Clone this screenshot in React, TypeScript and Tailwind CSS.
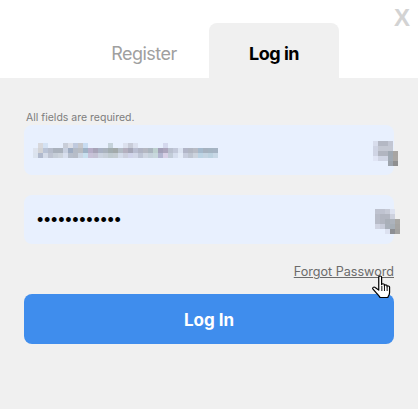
const topRow: [number, string][] = [
  [38, '#d8d8dc'], [43, '#d4e2f4'], [63, '#c9ced9'], [68, '#dcdfe8'], [73, '#c0cade'], [78, '#c7c8cc'], [83, '#c8dcf2'],
  [108, '#c5d2da'], [123, '#dce1ee'], [128, '#c8ccd8'], [133, '#dbe0ee'], [163, '#d5d9ee'],
];

const midRow = [
  '#dde3ee', '#d2d3d6', '#b9c3d6', '#b5bccb', '#aab2bd', '#aab2bd', '#c8d0e0', '#9eacc2', '#b4bbc6', '#b8bcc2',
  '#9fb3c6', '#b6aec8', '#a8a4b8', '#a9b2c4', '#aab3be', '#a2adb0', '#a3aaaa', '#b3bcc6', '#b4b0bf', '#a5a7b8',
  '#b8bdd0', '#b0b4c4', '#b5b8c2', '#aab5bf', '#bdd0cf', '#a29fb8', '#aca6bd', '#b9c0cf', '#c3c9da', '#dce4f2',
  '#b2b6c8', '#b1b6c2', '#b8bcc6', '#a4b9cc', '#a6b2c0', '#a4b4c2', '#a6b4c4',
];

const lowRow = [
  '#dbe3ee', '#b1bacd', '#d4dbe8', '#bec4d2', '#c6ced8', '#ccd3dc', '#d8dfee', '#b7bfcc', '#b7bdc8', '#cbd5e2',
  '#c8e0ee', '#c8c2d8', '#c4c2d4', '#cbd3e0', '#c8d0da', '#c0cbd0', '#c4ccd2', '#d4dcea', '#ccd0de', '#d0d4ea',
  '#d2d8e8', '#bfc6d6', '#cfd6e2', '#c6d2dc', '#c8d8dd', '#b3b6d0', '#d8d0e6', '#c2ccd8', '#d6deee', '#e4ecf8',
  '#c8cede', '#bfc6d2', '#cdd4de', '#bcd4e4', '#c4d4e2', '#bcd2e0', '#c8d8e6',
];

const keyOne = [
  ['#d8ddec', '#b4b8c4', '#b4b8c4', '#c2c6d3', ''],
  ['#cfd4e4', '#c4c8d3', '#c4c8d3', '#c4c8d3', ''],
  ['#cfd4e4', '#b1b5c0', '#b1b5c0', '#9fa8b2', '#a8a5a2'],
  ['#e0e5f5', '#d0d5e4', '#d0d5e4', '#a0a9b3', '#a9a6a3'],
  ['', '', '', '#9ca3ab', '#8f8f8f'],
];

const keyTwo = [
  ['#bfc3d0', '#bfc3d0', '#c6cad6', '#dde2f0', ''],
  ['#b8bcc8', '#b2b6c1', '#b2b6c1', '#cdd1de', ''],
  ['#b8bcc8', '#b2b6c1', '#a9afb8', '#adb3bc', '#a9a8a5'],
  ['#d0d4e2', '#c8ccda', '#a9b0ba', '#a7afb7', '#a6a5a3'],
  ['', '', '#dce1f0', '#8d8f93', '#a3a2a0'],
];

function BlurredEmail() {
  return (
    <svg width="186" height="15" viewBox="0 0 186 15" shapeRendering="crispEdges" className="mt-[1px] block">
      {topRow.map(([x, fill]) => (
        <rect key={x} x={x - 33} y={0} width={5} height={5} fill={fill} />
      ))}
      {midRow.map((fill, i) => (
        <rect key={i} x={i * 5} y={5} width={5} height={5} fill={fill} />
      ))}
      {lowRow.map((fill, i) => (
        <rect key={i} x={i * 5} y={10} width={5} height={5} fill={fill} />
      ))}
    </svg>
  );
}

function BlurredKey({ rows, className }: { rows: string[][]; className: string }) {
  return (
    <svg width="25" height="25" viewBox="0 0 25 25" shapeRendering="crispEdges" className={className}>
      {rows.map((row, y) =>
        row.map((fill, x) =>
          fill ? <rect key={`${x}-${y}`} x={x * 5} y={y * 5} width={5} height={5} fill={fill} /> : null
        )
      )}
    </svg>
  );
}

function HandCursor() {
  return (
    <svg
      width="21"
      height="25"
      viewBox="0 0 19 25"
      preserveAspectRatio="none"
      className="absolute left-[371px] top-[275px]"
    >
      <path
        d="M7 2.2c0-1.6 2.6-1.6 2.6 0v7.6c0-1.4 2.5-1.4 2.5 0v1c0-1.3 2.4-1.3 2.4 0v1c0-1.2 2.3-1.2 2.3 0.2v5.4c0 2.4-1 3.4-1.6 5.1H8.2c-.7-1.8-2.2-3.2-3.8-5.2l-2.6-3.2c-1-1.4.8-2.8 2-1.6L7 15.2z"
        fill="#fff"
        stroke="#000"
        strokeWidth="1.1"
        strokeLinejoin="round"
      />
      <path d="M9.8 11v5M12.2 11v5M14.6 12v4" stroke="#000" strokeWidth="0.9" fill="none" />
    </svg>
  );
}

export default function App() {
  return (
    <div className="relative h-[409px] w-[418px] overflow-hidden bg-white font-['Inter',sans-serif]">
      <button className="absolute left-[394px] top-[4px] font-['Liberation_Sans',sans-serif] text-[24px] font-bold leading-7 text-[#d3d3d3]">
        X
      </button>

      <div className="flex h-[78px] items-end pl-[79px] pt-[23px]">
        <div className="flex h-full w-[130px] items-center justify-center pt-[6px] text-[18px] tracking-[-0.5px] text-[#a0a0a0]">
          Register
        </div>
        <div className="flex h-full w-[130px] items-center justify-center rounded-t-lg bg-[#f0f0f0] pt-[6px] text-[18px] font-bold tracking-[-0.5px] text-black">
          Log in
        </div>
      </div>

      <div className="flex h-[331px] flex-col bg-[#f0f0f0] px-[24px] pt-[33px]">
        <p className="pl-[2px] text-[10.5px] leading-[14px] text-[#7d7d7d]">All fields are required.</p>

        <div className="flex h-[50px] items-center justify-between rounded-lg bg-[#e8f0fe] pl-[9px]">
          <BlurredEmail />
          <BlurredKey rows={keyOne} className="-mr-[4px] mt-[7px]" />
        </div>

        <div className="mt-[20px] flex h-[49px] items-center justify-between rounded-lg bg-[#e8f0fe] pl-[13px]">
          <span className="font-['Liberation_Sans',sans-serif] text-[18px] leading-none tracking-[0.75px] text-black">
            ••••••••••••
          </span>
          <BlurredKey rows={keyTwo} className="-mr-[6px] mt-[4px]" />
        </div>

        <div className="mt-[20px] flex justify-end">
          <a className="text-[12.6px] leading-[16px] text-[#6b6b6b] underline">Forgot Password</a>
        </div>

        <button className="mt-[14px] h-[50px] w-full rounded-lg bg-[#3f8ded] pt-[3px] text-[17px] font-bold text-white">
          Log In
        </button>
      </div>

      <HandCursor />
    </div>
  );
}
